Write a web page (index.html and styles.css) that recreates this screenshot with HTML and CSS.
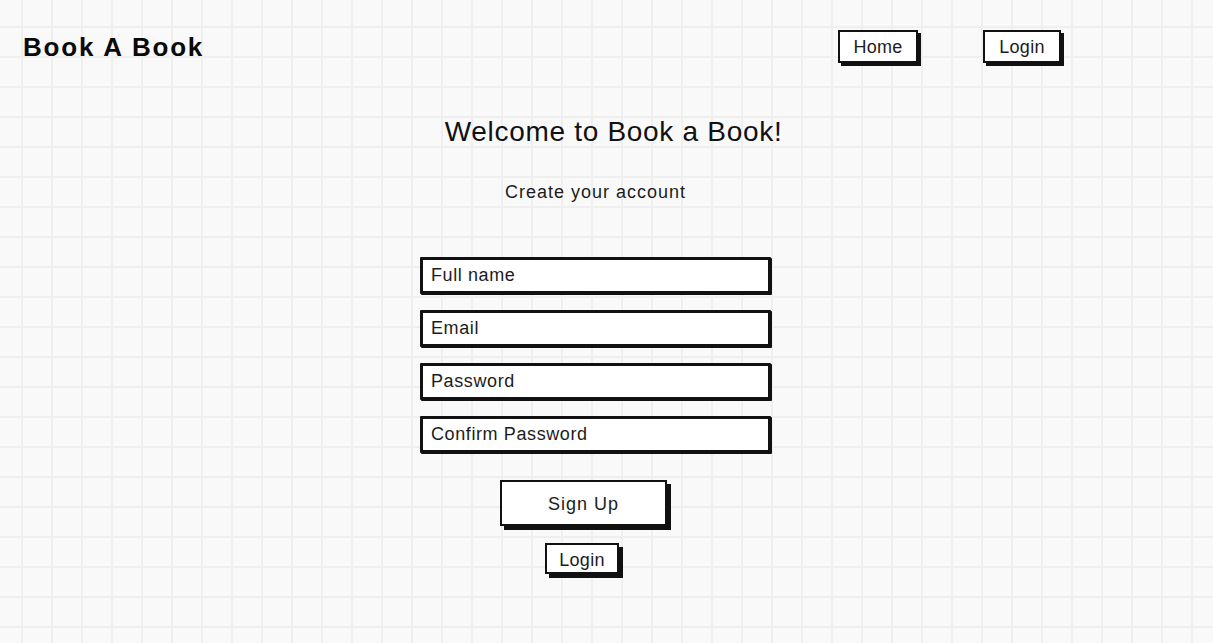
FILE: index.html
```html
<!DOCTYPE html>
<html lang="en">
<head>
<meta charset="utf-8">
<title>Book A Book - Sign Up</title>
<link rel="stylesheet" href="styles.css">
</head>
<body>
  <header class="topbar">
    <div class="logo">Book A Book</div>
    <nav class="nav">
      <a class="nav-btn nav-home" href="#">Home</a>
      <a class="nav-btn nav-login" href="#">Login</a>
    </nav>
  </header>
  <main class="signup">
    <h1 class="title">Welcome to Book a Book!</h1>
    <p class="subtitle">Create your account</p>
    <form class="form">
      <input class="field" type="text" placeholder="Full name">
      <input class="field" type="email" placeholder="Email">
      <input class="field" type="password" placeholder="Password">
      <input class="field" type="password" placeholder="Confirm Password">
    </form>
    <div class="actions">
      <button class="btn btn-primary" type="button">Sign Up</button>
      <button class="btn btn-login" type="button">Login</button>
    </div>
  </main>
</body>
</html>
```
FILE: styles.css
```css
html, body {
  margin: 0;
  padding: 0;
}

body {
  min-height: 100vh;
  box-sizing: border-box;
  background-color: #f9f9f9;
  background-image:
    linear-gradient(to right, #efefef 2px, transparent 2px),
    linear-gradient(to bottom, #efefef 2px, transparent 2px);
  background-size: 30px 30px, 30px 30px;
  background-position: 21px 0, 0 26px;
  font-family: "Liberation Sans", Arial, sans-serif;
  color: #1c1c1c;
}

.topbar {
  display: flex;
  align-items: flex-start;
  padding: 30px 152px 0 23px;
}

.logo {
  font-weight: bold;
  font-size: 26px;
  line-height: 32px;
  letter-spacing: 1.8px;
  padding-top: 1px;
  color: #0a0a0a;
}

.nav {
  margin-left: auto;
  display: flex;
  gap: 65px;
}

.nav-btn {
  box-sizing: border-box;
  height: 33px;
  padding-top: 2px;
  display: flex;
  align-items: center;
  justify-content: center;
  border: 2px solid #111;
  box-shadow: 3px 3px 0 #111;
  background: #fff;
  color: #1c1c1c;
  text-decoration: none;
  font-size: 18px;
  letter-spacing: 0.3px;
}

.nav-home {
  width: 80px;
}

.nav-login {
  width: 78px;
}

.signup {
  display: flex;
  flex-direction: column;
  align-items: center;
  padding-right: 22px;
}

.title {
  margin: 52px 0 0 36px;
  font-size: 28px;
  line-height: 34px;
  font-weight: normal;
  letter-spacing: 0.7px;
  color: #111;
}

.subtitle {
  margin: 32px 0 0;
  font-size: 18px;
  line-height: 22px;
  letter-spacing: 1px;
}

.form {
  display: flex;
  flex-direction: column;
  gap: 16px;
  margin: 54px 0 0;
  width: 351px;
}

.field {
  box-sizing: border-box;
  width: 351px;
  height: 37px;
  margin: 0;
  padding: 0 8px;
  border: 3px solid #111;
  border-radius: 1px;
  box-shadow: 1px 1px 0 #111;
  background: #fff;
  font-family: "Liberation Sans", Arial, sans-serif;
  font-size: 18px;
  letter-spacing: 0.6px;
  color: #1c1c1c;
  outline: none;
}

.field::placeholder {
  color: #1c1c1c;
  opacity: 1;
}

.actions {
  display: flex;
  flex-direction: column;
  align-items: center;
  gap: 17px;
  margin-top: 27px;
}

.btn {
  box-sizing: border-box;
  display: flex;
  align-items: center;
  justify-content: center;
  margin: 0;
  padding: 3px 0 0;
  border: 2px solid #111;
  background: #fff;
  font-family: "Liberation Sans", Arial, sans-serif;
  font-size: 18px;
  color: #1c1c1c;
  cursor: pointer;
}

.btn-primary {
  width: 167px;
  height: 46px;
  margin-right: 24px;
  box-shadow: 4px 4px 0 #111;
  letter-spacing: 1px;
}

.btn-login {
  width: 74px;
  height: 31px;
  margin-right: 27px;
  box-shadow: 4px 4px 0 #111;
  letter-spacing: 0.3px;
}
```
